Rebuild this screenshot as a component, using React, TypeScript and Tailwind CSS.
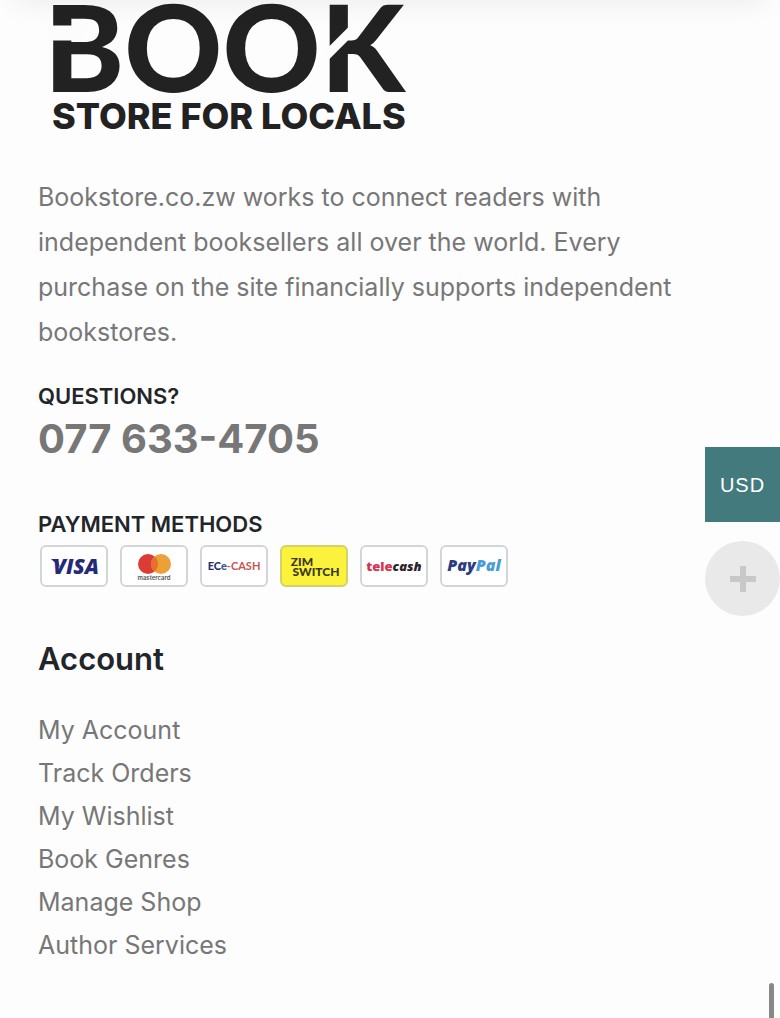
import React from 'react';
import { clsx } from 'clsx';

interface AccountLink {
  label: string;
  href: string;
}

const accountLinks: AccountLink[] = [
  { label: 'My Account', href: '#my-account' },
  { label: 'Track Orders', href: '#track-orders' },
  { label: 'My Wishlist', href: '#wishlist' },
  { label: 'Book Genres', href: '#genres' },
  { label: 'Manage Shop', href: '#manage-shop' },
  { label: 'Author Services', href: '#author-services' },
];

const Logo: React.FC = () => (
  <svg
    className="block h-[136px] w-[380px] overflow-visible"
    viewBox="0 0 380 136"
    role="img"
    aria-label="Book Store for Locals"
    fontFamily="Inter, sans-serif"
    fill="#222222"
  >
    <text x="6" y="92" fontSize="121" fontWeight="900" fontFamily="Lato, sans-serif">BOOK</text>
    {/* notches in the B and the K */}
    <path d="M10 33H44" stroke="#fcfcfc" strokeWidth="15" />
    <path d="M286 58L314 30" stroke="#fcfcfc" strokeWidth="9" />
    <text x="14" y="129" fontSize="36" fontWeight="800">STORE FOR LOCALS</text>
  </svg>
);

const PaymentCard: React.FC<{ name: string; yellow?: boolean; children: React.ReactNode }> = ({
  name,
  yellow,
  children,
}) => (
  <li
    className={clsx(
      'h-[42px] w-[68px] overflow-hidden rounded-md border-2',
      yellow ? 'border-[#d5d067] bg-[#fbf33b]' : 'border-[#d3d6d8] bg-white',
    )}
  >
    <svg className="block h-full w-full" viewBox="0 0 64 38" role="img" aria-label={name} textAnchor="middle">
      {children}
    </svg>
  </li>
);

const PaymentMethods: React.FC = () => (
  <ul className="ml-[2px] flex flex-wrap gap-[12px]">
    <PaymentCard name="Visa">
      <text x="34" y="27" fontSize="21" fontWeight="800" fontStyle="italic" fontFamily="Open Sans, sans-serif" fill="#242a78">VISA</text>
      <path d="M9 12H15L18 20Z" fill="#242a78" />
    </PaymentCard>
    <PaymentCard name="Mastercard">
      <circle cx="26" cy="17" r="10" fill="#dc3c36" />
      <circle cx="39" cy="17" r="10" fill="#eba137" />
      <path d="M32.500 9.400a10 10 0 0 1 0 15.200a10 10 0 0 1 0-15.200z" fill="#e8702e" />
      <text x="32" y="33" fontSize="6" fontWeight="600" fontFamily="Inter, sans-serif" fill="#555555">mastercard</text>
    </PaymentCard>
    <PaymentCard name="EcoCash">
      <text x="32" y="23" fontSize="11" fontWeight="700" fontFamily="Lato, sans-serif">
        <tspan fill="#28316c" fontWeight="900">EC</tspan>
        <tspan fill="#3d55a0" fontWeight="900">e</tspan>
        <tspan fill="#c9544f">-CASH</tspan>
      </text>
    </PaymentCard>
    <PaymentCard name="ZimSwitch" yellow>
      <text x="20" y="19" fontSize="12" fontWeight="900" fontFamily="Lato, sans-serif" fill="#39381b">ZIM</text>
      <text x="34" y="29" fontSize="12" fontWeight="900" fontFamily="Lato, sans-serif" fill="#39381b">SWITCH</text>
    </PaymentCard>
    <PaymentCard name="Telecash">
      <text x="32" y="24" fontSize="13" fontWeight="800" fontFamily="Open Sans, sans-serif">
        <tspan fill="#d8324f">tele</tspan>
        <tspan fill="#2b2529" fontStyle="italic">cash</tspan>
      </text>
    </PaymentCard>
    <PaymentCard name="PayPal">
      <text x="32" y="24" fontSize="16" fontWeight="800" fontStyle="italic" fontFamily="Open Sans, sans-serif">
        <tspan fill="#2c3c80">Pay</tspan>
        <tspan fill="#4a9bd9">Pal</tspan>
      </text>
    </PaymentCard>
  </ul>
);

const App: React.FC = () => {
  return (
    <div className="min-h-screen bg-[#fdfdfd] font-['Inter',sans-serif] text-[#777777]">
      <div className="pointer-events-none fixed inset-x-4 -top-10 h-10 shadow-[0_2px_30px_rgba(0,0,0,0.08)]" />

      <footer className="pr-[60px] pb-[50px] pl-[38px]">
        <Logo />

        <p className="mt-[39px] text-[25px] leading-[45px]">
          Bookstore.co.zw works to connect readers with independent booksellers all over the world. Every
          purchase on the site financially supports independent bookstores.
        </p>

        <section className="mt-[26px]">
          <h2 className="text-[22px] leading-[30px] font-semibold text-[#222529]">QUESTIONS?</h2>
          <a href="tel:0776334705" className="block text-[40px] leading-[56px] font-bold">
            077 633-4705
          </a>
        </section>

        <section className="mt-[42px]">
          <h2 className="mb-[6px] text-[22px] leading-[30px] font-semibold text-[#222529]">PAYMENT METHODS</h2>
          <PaymentMethods />
        </section>

        <nav className="mt-[50px]" aria-labelledby="account-title">
          <h2 id="account-title" className="text-[31px] leading-[44px] font-semibold text-[#222529]">
            Account
          </h2>
          <ul className="mt-[28px] text-[25px] leading-[43px]">
            {accountLinks.map((link) => (
              <li key={link.href}>
                <a href={link.href} className="hover:underline">
                  {link.label}
                </a>
              </li>
            ))}
          </ul>
        </nav>
      </footer>

      {/* Floating currency switcher */}
      <div className="fixed top-[447px] right-0 flex flex-col gap-[19px]">
        <button
          type="button"
          className="size-[75px] bg-[#437a7d] font-['Liberation_Sans',sans-serif] text-[20px] tracking-wider text-white"
        >
          USD
        </button>
        <button
          type="button"
          aria-label="More currencies"
          className="flex size-[75px] items-center justify-center rounded-full bg-[#e9e9e9]"
        >
          <svg className="size-[26px]" viewBox="0 0 26 26" fill="none" stroke="#c8c8c8" strokeWidth="6">
            <path d="M13 0V26M0 13H26" />
          </svg>
        </button>
      </div>

      <div className="pointer-events-none fixed right-[6px] bottom-0 h-[35px] w-[5px] rounded-t-full bg-[#888888]" />
    </div>
  );
};

export default App;
